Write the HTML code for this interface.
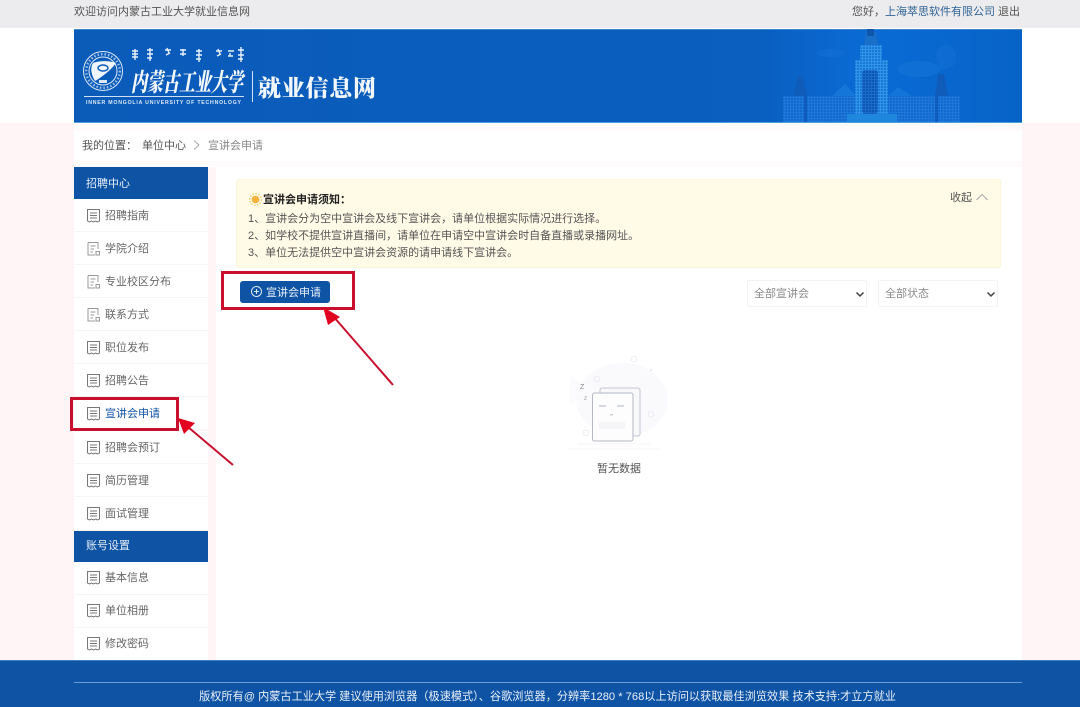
<!DOCTYPE html>
<html lang="zh-CN"><head><meta charset="utf-8"><title>宣讲会申请</title>
<style>
*{box-sizing:border-box;margin:0;padding:0}
html,body{width:1080px;height:707px;overflow:hidden;background:#fff;font-family:"Liberation Sans","Noto Sans CJK SC",sans-serif;font-size:11px;color:#555}
.abs{position:absolute}
#p{position:relative;width:1080px;height:707px;overflow:hidden;background:#fff}
.t{position:absolute;white-space:nowrap;line-height:14px}
.item{position:absolute;left:74px;width:134px;height:33px;background:#fff;border-bottom:1px solid #f6f4f4}
.item svg{position:absolute;left:12px;top:9px}
.item span{position:absolute;left:31px;top:10px;line-height:14px;font-size:11px;color:#666;white-space:nowrap}
.low svg{top:8px}
.low span{top:9px}
.hd{position:absolute;left:74px;width:134px;background:#0f53a5;color:#e6eef8;font-size:11px;padding-left:12px}
.sel{position:absolute;top:280px;width:120px;height:27px;background:#fff;border:1px solid #f4f3f3;border-radius:2px;color:#8a8a8a;font-size:11px;line-height:27px;padding-left:6px}
.sel svg{position:absolute;right:1px;top:10px}
.red{position:absolute;border:3px solid #c8102e}
</style></head><body><div id="p">
<div class="abs" style="left:0;top:0;width:1080px;height:28px;background:#ecebed"></div>
<div class="t" style="left:74px;top:5px;font-size:11px;color:#555">欢迎访问内蒙古工业大学就业信息网</div>
<div class="t" style="left:852px;top:5px;font-size:11px;color:#555">您好，<span style="color:#2f6496">上海萃思软件有限公司</span> 退出</div>

<div class="abs" style="left:0;top:123px;width:1080px;height:537px;background:#fff5f7"></div>
<div class="abs" style="left:74px;top:123px;width:948px;height:44px;background:#fffafb"></div>
<div class="abs" style="left:74px;top:131px;width:948px;height:30px;background:#fff"></div>
<div class="t" style="left:82px;top:139px;color:#555">我的位置：</div>
<div class="t" style="left:142px;top:139px;color:#555">单位中心</div>
<svg class="abs" style="left:192px;top:139px" width="10" height="12"><path d="M2 1.500L7 6L2 10.500" fill="none" stroke="#aaa" stroke-width="1"/></svg>
<div class="t" style="left:208px;top:139px;color:#888">宣讲会申请</div>

<!-- banner -->
<svg class="abs" style="left:74px;top:29px" width="948" height="94" viewBox="0 0 948 94">
<defs>
<linearGradient id="bg" x1="0" x2="1" y1="0" y2="0"><stop offset="0" stop-color="#0b5bb9"/><stop offset=".72" stop-color="#0a5fbf"/><stop offset=".84" stop-color="#0a6bd6"/><stop offset="1" stop-color="#0763c6"/></linearGradient>
<pattern id="win" width="3" height="3" patternUnits="userSpaceOnUse"><rect width="3" height="3" fill="#1c78da"/><rect width="2" height="2" fill="#1468cc"/></pattern>
<pattern id="win2" width="3" height="3" patternUnits="userSpaceOnUse"><rect width="3" height="3" fill="#2f93e8"/><rect width="2" height="2" fill="#1a78d8"/></pattern>
<pattern id="win3" width="3" height="3" patternUnits="userSpaceOnUse"><rect width="3" height="3" fill="#1a6ccc"/><rect width="2" height="2" fill="#0e58b4"/></pattern>
</defs>
<rect width="948" height="94" fill="url(#bg)"/>
<rect width="948" height="1" fill="#3a85cc"/><rect y="93" width="948" height="1" fill="#4a9ce0"/>
<!-- seal -->
<g transform="translate(29,42)" fill="none" stroke="#dbe8f8">
<circle r="19.500" stroke-width="1"/><circle r="14" stroke-width="1"/><circle r="16.800" stroke-width="2.500" stroke-dasharray="1.500 2" opacity=".7"/>
<path d="M-10 -8C-3 -11 8 -10 13 -8C8 -1 -1 6 -8 10C-12 3 -13 -3 -10 -8Z" fill="#eef5fc" stroke="none"/>
<ellipse cx="0" cy="-3" rx="5" ry="3" stroke="#0b5bb9" stroke-width="1.400"/>
<rect x="-4" y="9" width="8" height="3" fill="#dbe8f8" stroke="none"/>
</g>
<!-- mongolian-like strokes -->
<g stroke="#e8f1fb" stroke-width="1.400" fill="none">
<path d="M61 20v11M58 22h6M58 25h6M58 28h6"/><path d="M76 19v13M73 21h6M73 25h6M73 29h5"/><path d="M91 21h6M93 19l2 5M96 24l-4 2"/><path d="M109 20v7M106 21h6M106 25h6"/><path d="M125 20v13M122 22h6M122 26h6M122 30h5"/><path d="M142 22h6M144 20l2 5M147 25l-4 2"/><path d="M154 22h6M156 24v3M154 27h5"/><path d="M167 18v15M164 21h6M164 26h6M164 30h5"/>
</g>
<text transform="translate(57,62) skewX(-10)" font-family="'Noto Serif CJK SC',serif" font-size="25" font-weight="900" fill="#f4f8fd" textLength="112" lengthAdjust="spacingAndGlyphs">内蒙古工业大学</text>
<rect x="10" y="67" width="160" height="1" fill="#cfe0f5"/>
<text x="12" y="75" font-family="'Liberation Sans',sans-serif" font-size="5.200" font-weight="700" fill="#dbe8f8" textLength="155">INNER MONGOLIA UNIVERSITY OF TECHNOLOGY</text>
<rect x="178" y="42" width="1" height="31" fill="#cfe0f5"/>
<text x="184" y="67" font-family="'Noto Serif CJK SC',serif" font-size="23" font-weight="900" fill="#f2f7fd" textLength="118" lengthAdjust="spacing">就业信息网</text>
<!-- building -->
<g>
<ellipse cx="757" cy="24" rx="14" ry="4" fill="#2483e0" opacity=".2"/>
<ellipse cx="845" cy="40" rx="22" ry="8" fill="#2483e0" opacity=".25"/>
<ellipse cx="872" cy="28" rx="10" ry="12" fill="#2483e0" opacity=".2"/>
<path d="M758 67L771 55L782 67Z" fill="#1c80de" opacity=".6"/>
<path d="M814 67L824 58L838 67Z" fill="#1c80de" opacity=".5"/>
<rect x="709" y="67" width="177" height="26" fill="url(#win)"/>
<rect x="730" y="67" width="3" height="26" fill="#0f5cbc"/>
<rect x="861" y="67" width="3" height="26" fill="#0f5cbc"/>
<path d="M719 67L724 47L729 47L733 67Z" fill="#0f5cba"/>
<path d="M861 67L864 45L870 45L874 67Z" fill="#0f5cba"/>
<rect x="781" y="31" width="33" height="58" fill="url(#win2)"/>
<rect x="788" y="41" width="16" height="44" rx="3" fill="url(#win3)"/>
<rect x="786" y="16" width="22" height="15" fill="url(#win2)"/>
<path d="M790 16L792 3H802L804 16Z" fill="#1a6fc8"/>
<rect x="793" y="0" width="7" height="7" fill="#0f55ac"/>
<rect x="773" y="85" width="50" height="8" fill="#1f86de"/>
</g>
</svg>

<!-- main -->
<div class="abs" style="left:216px;top:167px;width:806px;height:493px;background:#fff"></div>

<!-- sidebar -->
<div class="hd" style="top:167px;height:32px;line-height:35px">招聘中心</div>
<div class="item" style="top:199px"><svg width="15" height="15" viewBox="0 0 15 15"><path d="M1.500 13V1.500H13.500V13L11.500 14L9.500 13L7.500 14L5.500 13L3.500 14Z M4 5H11M4 7.500H11M4 10H11" fill="none" stroke="#777" stroke-width="1"/></svg><span>招聘指南</span></div>
<div class="item" style="top:232px"><svg width="15" height="15" viewBox="0 0 15 15"><path d="M2 1.500H12V8M2 1.500V14H9M4.500 5H9.500M4.500 8H8M4.500 11H7M10 10.500H13.500V14H10Z" fill="none" stroke="#999" stroke-width="1"/></svg><span>学院介绍</span></div>
<div class="item" style="top:265px"><svg width="15" height="15" viewBox="0 0 15 15"><path d="M2 1.500H12V8M2 1.500V14H9M4.500 5H9.500M4.500 8H8M4.500 11H7M10 10.500H13.500V14H10Z" fill="none" stroke="#999" stroke-width="1"/></svg><span>专业校区分布</span></div>
<div class="item" style="top:298px"><svg width="15" height="15" viewBox="0 0 15 15"><path d="M2 1.500H12V8M2 1.500V14H9M4.500 5H9.500M4.500 8H8M4.500 11H7M10 10.500H13.500V14H10Z" fill="none" stroke="#999" stroke-width="1"/></svg><span>联系方式</span></div>
<div class="item" style="top:331px"><svg width="15" height="15" viewBox="0 0 15 15"><path d="M1.500 13V1.500H13.500V13L11.500 14L9.500 13L7.500 14L5.500 13L3.500 14Z M4 5H11M4 7.500H11M4 10H11" fill="none" stroke="#777" stroke-width="1"/></svg><span>职位发布</span></div>
<div class="item" style="top:364px"><svg width="15" height="15" viewBox="0 0 15 15"><path d="M1.500 13V1.500H13.500V13L11.500 14L9.500 13L7.500 14L5.500 13L3.500 14Z M4 5H11M4 7.500H11M4 10H11" fill="none" stroke="#777" stroke-width="1"/></svg><span>招聘公告</span></div>
<div class="item" style="top:397px"><svg width="15" height="15" viewBox="0 0 15 15"><path d="M1.500 13V1.500H13.500V13L11.500 14L9.500 13L7.500 14L5.500 13L3.500 14Z M4 5H11M4 7.500H11M4 10H11" fill="none" stroke="#777" stroke-width="1"/></svg><span style="color:#0f53a5">宣讲会申请</span></div>
<div class="item" style="top:431px"><svg width="15" height="15" viewBox="0 0 15 15"><path d="M1.500 13V1.500H13.500V13L11.500 14L9.500 13L7.500 14L5.500 13L3.500 14Z M4 5H11M4 7.500H11M4 10H11" fill="none" stroke="#777" stroke-width="1"/></svg><span>招聘会预订</span></div>
<div class="item" style="top:464px"><svg width="15" height="15" viewBox="0 0 15 15"><path d="M1.500 13V1.500H13.500V13L11.500 14L9.500 13L7.500 14L5.500 13L3.500 14Z M4 5H11M4 7.500H11M4 10H11" fill="none" stroke="#777" stroke-width="1"/></svg><span>简历管理</span></div>
<div class="item" style="top:497px;height:34px"><svg width="15" height="15" viewBox="0 0 15 15"><path d="M1.500 13V1.500H13.500V13L11.500 14L9.500 13L7.500 14L5.500 13L3.500 14Z M4 5H11M4 7.500H11M4 10H11" fill="none" stroke="#777" stroke-width="1"/></svg><span>面试管理</span></div>
<div class="hd" style="top:531px;height:31px;line-height:30px">账号设置</div>
<div class="item low" style="top:562px"><svg width="15" height="15" viewBox="0 0 15 15"><path d="M1.500 13V1.500H13.500V13L11.500 14L9.500 13L7.500 14L5.500 13L3.500 14Z M4 5H11M4 7.500H11M4 10H11" fill="none" stroke="#777" stroke-width="1"/></svg><span>基本信息</span></div>
<div class="item low" style="top:595px"><svg width="15" height="15" viewBox="0 0 15 15"><path d="M1.500 13V1.500H13.500V13L11.500 14L9.500 13L7.500 14L5.500 13L3.500 14Z M4 5H11M4 7.500H11M4 10H11" fill="none" stroke="#777" stroke-width="1"/></svg><span>单位相册</span></div>
<div class="item low" style="top:628px;height:33px;border:0"><svg width="15" height="15" viewBox="0 0 15 15"><path d="M1.500 13V1.500H13.500V13L11.500 14L9.500 13L7.500 14L5.500 13L3.500 14Z M4 5H11M4 7.500H11M4 10H11" fill="none" stroke="#777" stroke-width="1"/></svg><span>修改密码</span></div>

<!-- notice -->
<div class="abs" style="left:236px;top:179px;width:765px;height:89px;background:#fffbe7;border:1px solid #fbf6da;border-radius:3px"></div>
<svg class="abs" style="left:249px;top:193px" width="13" height="13"><circle cx="6.500" cy="6.500" r="3.800" fill="#f7b23b"/><circle cx="6.500" cy="6.500" r="5.800" fill="none" stroke="#f9c566" stroke-width="1.300" stroke-dasharray="1.500 1.500"/></svg>
<div class="t" style="left:263px;top:193px;font-weight:700;color:#222;font-size:11px">宣讲会申请须知：</div>
<div class="t" style="left:248px;top:212px;color:#555;font-size:11px">1、宣讲会分为空中宣讲会及线下宣讲会，请单位根据实际情况进行选择。</div>
<div class="t" style="left:248px;top:229px;color:#555;font-size:11px">2、如学校不提供宣讲直播间，请单位在申请空中宣讲会时自备直播或录播网址。</div>
<div class="t" style="left:248px;top:246px;color:#555;font-size:11px">3、单位无法提供空中宣讲会资源的请申请线下宣讲会。</div>
<div class="t" style="left:950px;top:191px;color:#555">收起</div>
<svg class="abs" style="left:975px;top:192px" width="14" height="10"><path d="M1.500 8L7 2.500L12.500 8" fill="none" stroke="#aaa" stroke-width="1"/></svg>

<!-- button -->
<div class="abs" style="left:240px;top:281px;width:90px;height:22px;background:#0f53a5;border-radius:3px"></div>
<svg class="abs" style="left:250px;top:285px" width="13" height="13"><circle cx="6.500" cy="6.500" r="5" fill="none" stroke="#dce8f6" stroke-width="1"/><path d="M4 6.500H9M6.500 4V9" stroke="#dce8f6" stroke-width="1"/></svg>
<div class="t" style="left:266px;top:286px;color:#e8f0fa;font-size:11px">宣讲会申请</div>
<div class="red" style="left:221px;top:271px;width:134px;height:39px"></div>

<div class="sel" style="left:747px">全部宣讲会<svg width="10" height="7"><path d="M1.500 1.500L5 5L8.500 1.500" fill="none" stroke="#444" stroke-width="1.500"/></svg></div>
<div class="sel" style="left:878px">全部状态<svg width="10" height="7"><path d="M1.500 1.500L5 5L8.500 1.500" fill="none" stroke="#444" stroke-width="1.500"/></svg></div>

<!-- empty -->
<svg class="abs" style="left:560px;top:345px" width="120" height="110" viewBox="0 0 120 110">
<ellipse cx="62" cy="55" rx="46" ry="37" fill="#fafafd"/>
<path d="M10 30L30 45L10 60Z" fill="#fbfbfd"/>
<circle cx="74" cy="14" r="2.800" fill="none" stroke="#eeeef4"/><circle cx="37" cy="34" r="2.800" fill="none" stroke="#eeeef4"/><circle cx="91" cy="69" r="2.800" fill="none" stroke="#ececf3"/><circle cx="26" cy="88" r="2.800" fill="none" stroke="#ececf3"/><circle cx="91" cy="25" r="1.200" fill="#e8e8f0"/>
<rect x="40" y="43" width="40" height="48" rx="2" fill="#f8f8fb" stroke="#c2c5d2" stroke-width="1"/>
<rect x="32.500" y="48" width="40.500" height="48" rx="2" fill="#fdfdfe" stroke="#b4b8c6" stroke-width="1"/>
<path d="M39 61h7M57 61h7" stroke="#b0b3c0" stroke-width="1"/>
<rect x="50" y="69" width="3" height="1.500" fill="#cfd1da"/>
<rect x="39" y="77" width="26" height="7" fill="#f5f5f8"/>
<text x="20" y="44" font-size="7" fill="#888" font-family="Liberation Sans">Z</text>
<text x="24" y="55" font-size="5" fill="#999" font-family="Liberation Sans">Z</text>
<path d="M8 104H100M18 99H90" stroke="#f6f6f8"/>
</svg>
<div class="t" style="left:597px;top:462px;color:#555;font-size:11px">暂无数据</div>

<!-- arrows -->
<svg class="abs" style="left:0;top:0" width="1080" height="707">
<path d="M393 385L333 316" stroke="#c8102e" stroke-width="2"/><path d="M323 307L340 317L328 325Z" fill="#e00020"/>
<path d="M233 465L188 427" stroke="#c8102e" stroke-width="2"/><path d="M178 418L195 423L184 434Z" fill="#e00020"/>
</svg>
<div class="red" style="left:70px;top:397px;width:109px;height:34px"></div>

<!-- footer -->
<div class="abs" style="left:0;top:660px;width:1080px;height:47px;background:#0f53a5;border-top:1px solid #3f7cc0"></div>
<div class="abs" style="left:74px;top:682px;width:948px;height:1px;background:#6b9ed6"></div>
<div class="t" style="left:0;width:1095px;text-align:center;top:690px;color:#e9f0f8;font-size:11.160px">版权所有@ 内蒙古工业大学 建议使用浏览器（极速模式）、谷歌浏览器，分辨率1280 * 768以上访问以获取最佳浏览效果 技术支持:才立方就业</div>
</div></body></html>
